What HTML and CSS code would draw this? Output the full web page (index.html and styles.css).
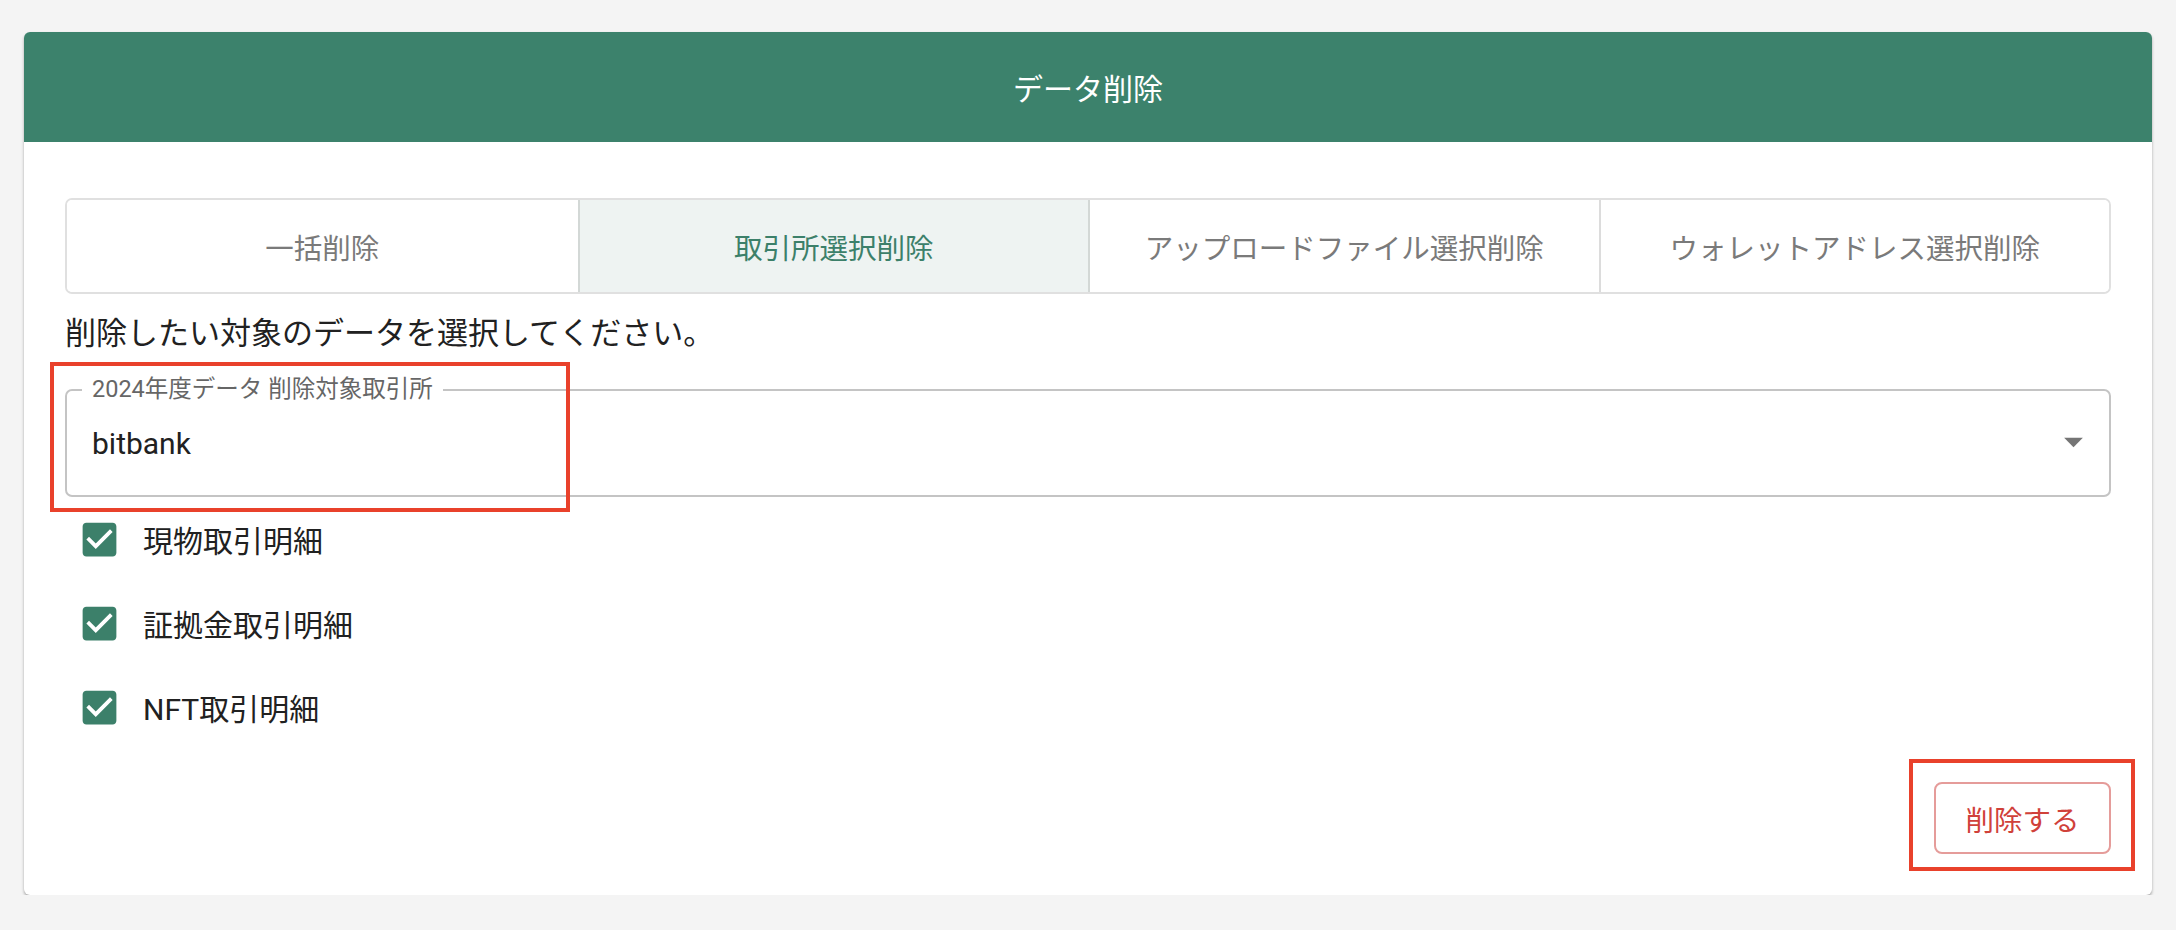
FILE: index.html
```html
<!DOCTYPE html>
<html lang="ja">
<head>
    <meta charset="UTF-8">
    <meta name="viewport" content="width=device-width, initial-scale=1.0">
    <title>データ削除</title>
    <link rel="stylesheet" href="styles.css">
</head>
<body>
    <div class="card">
        <div class="card-header">データ削除</div>

        <div class="card-body">
            <div class="tabs">
                <button class="tab">一括削除</button>
                <button class="tab active">取引所選択削除</button>
                <button class="tab">アップロードファイル選択削除</button>
                <button class="tab">ウォレットアドレス選択削除</button>
            </div>

            <p class="hint">削除したい対象のデータを選択してください。</p>

            <div class="select">
                <span class="select-label">2024年度データ 削除対象取引所</span>
                <span class="select-value">bitbank</span>
                <svg class="select-arrow" viewBox="0 0 24 24"><path d="M7 10l5 5 5-5z"/></svg>
            </div>

            <div class="checks">
                <label class="check">
                    <svg class="check-icon" viewBox="0 0 24 24"><path d="M19 3H5c-1.11 0-2 .9-2 2v14c0 1.1.89 2 2 2h14c1.11 0 2-.9 2-2V5c0-1.1-.89-2-2-2zm-9 14l-5-5 1.41-1.41L10 14.17l7.59-7.59L19 8l-9 9z"/></svg>
                    <span>現物取引明細</span>
                </label>
                <label class="check">
                    <svg class="check-icon" viewBox="0 0 24 24"><path d="M19 3H5c-1.11 0-2 .9-2 2v14c0 1.1.89 2 2 2h14c1.11 0 2-.9 2-2V5c0-1.1-.89-2-2-2zm-9 14l-5-5 1.41-1.41L10 14.17l7.59-7.59L19 8l-9 9z"/></svg>
                    <span>証拠金取引明細</span>
                </label>
                <label class="check">
                    <svg class="check-icon" viewBox="0 0 24 24"><path d="M19 3H5c-1.11 0-2 .9-2 2v14c0 1.1.89 2 2 2h14c1.11 0 2-.9 2-2V5c0-1.1-.89-2-2-2zm-9 14l-5-5 1.41-1.41L10 14.17l7.59-7.59L19 8l-9 9z"/></svg>
                    <span>NFT取引明細</span>
                </label>
            </div>

            <div class="actions">
                <button class="delete-btn">削除する</button>
            </div>
        </div>

        <!-- annotation boxes -->
        <div class="mark mark-select"></div>
        <div class="mark mark-button"></div>
    </div>
</body>
</html>
```

FILE: styles.css
```css
* {
    margin: 0;
    padding: 0;
    box-sizing: border-box;
}

body {
    font-family: Roboto, "Noto Sans CJK JP", sans-serif;
    background: #f4f4f4;
    color: #212121;
}

.card {
    position: relative;
    margin: 32px 24px 0;
    height: 863px;
    background: #fff;
    border-radius: 6px;
    box-shadow: 0 2px 3px rgba(0, 0, 0, 0.32);
    overflow: hidden;
}

.card-header {
    height: 110px;
    background: #3c826c;
    color: #fff;
    font-size: 30px;
    display: flex;
    justify-content: center;
    align-items: center;
}

.card-body {
    padding: 56px 41px 0;
}

.tabs {
    display: grid;
    grid-template-columns: repeat(4, 1fr);
    height: 96px;
    border: 2px solid #e0e0e0;
    border-radius: 7px;
    overflow: hidden;
}

.tab {
    font-family: inherit;
    font-size: 28.5px;
    color: #7a7a7a;
    background: #fff;
    border: none;
    border-left: 2px solid #dcdcdc;
}

.tab:first-child {
    border-left: none;
}

.tab.active {
    background: #eef3f2;
    color: #3c806a;
    border-left-color: #d3d8d6;
}

.tab.active + .tab {
    border-left-color: #d3d8d6;
}

.hint {
    font-size: 31px;
    line-height: 40px;
    margin-top: 20px;
}

.select {
    position: relative;
    display: flex;
    align-items: center;
    height: 108px;
    margin-top: 35px;
    padding-left: 25px;
    border: 2px solid #c4c4c4;
    border-radius: 7px;
}

.select-label {
    position: absolute;
    top: -16px;
    left: 15px;
    padding: 0 10px;
    background: #fff;
    font-size: 23.5px;
    line-height: 28px;
    color: #666;
}

.select-value {
    flex: 1;
    font-size: 30px;
}

.select-arrow {
    width: 45px;
    height: 45px;
    margin-right: 13px;
    margin-top: -3px;
    fill: #757575;
}

.checks {
    margin-top: 0;
}

.check {
    display: flex;
    align-items: center;
    gap: 21px;
    height: 84px;
    padding-left: 12px;
    font-size: 30px;
}

.check-icon {
    width: 45px;
    height: 45px;
    fill: #3c806a;
}

.actions {
    display: flex;
    justify-content: flex-end;
    margin-top: 33px;
}

.delete-btn {
    width: 177px;
    height: 72px;
    font-family: inherit;
    font-size: 28.5px;
    color: #d0413a;
    background: #fff;
    border: 2px solid #e59c9a;
    border-radius: 8px;
}

.mark {
    position: absolute;
    border: 4px solid #e9412b;
}

.mark-select {
    left: 26px;
    top: 330px;
    width: 520px;
    height: 150px;
}

.mark-button {
    left: 1885px;
    top: 727px;
    width: 226px;
    height: 112px;
}
```
